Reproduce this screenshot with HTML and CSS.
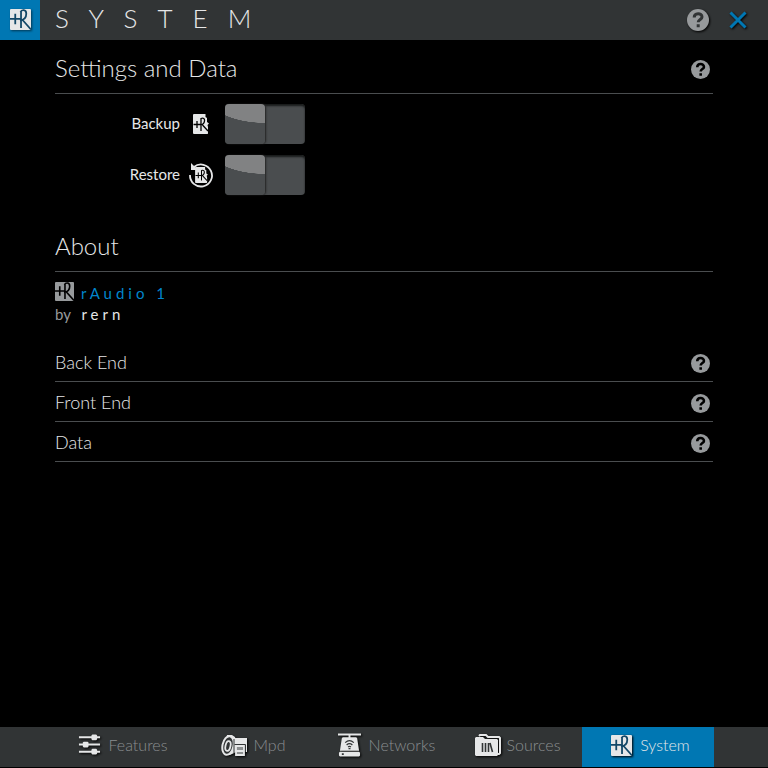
FILE: index.html
```html
<!DOCTYPE html>
<html lang="en">
<head>
<meta charset="utf-8">
<meta name="viewport" content="width=device-width, initial-scale=1">
<title>System</title>
<link rel="stylesheet" href="styles.css">
</head>
<body>
<svg class="sprite" aria-hidden="true">
  <symbol id="logo" viewBox="0 0 20 20">
    <rect width="20" height="20" rx="1" fill="currentColor"/>
    <path class="ink" d="M0 9.500H10M5 4.500V14.500M10.500 2.500V18M10 3C11 0.500 15.500 0 15.500 4.500C15.500 8.500 13 10.500 9.500 11M12 10.500L20 19.500"/>
  </symbol>
  <symbol id="help" viewBox="0 0 22 22">
    <circle cx="11" cy="11" r="11" fill="currentColor"/>
    <path class="ink help-ink" d="M7.200 8.500C7.200 3.500 15 3.500 15 8C15 10.500 11.200 10.500 11.200 13.300M11.200 15.300V18.200"/>
  </symbol>
  <symbol id="file" viewBox="0 0 16 20">
    <path fill="currentColor" d="M1 0H12.500V3L14 4V8L16 9.500L14.500 11L15 13V19.500L14.500 20H1Q0 20 0 19V1Q0 0 1 0Z"/>
    <path class="ink fine" d="M0.500 10.500H8M4 7V14M8 4V17M8 4.500C13 2.500 12.500 9.500 8 11M9.500 11L15 17"/>
  </symbol>
</svg>

<header class="topbar">
  <a class="brand" href="#" aria-label="Home"><svg class="icon-brand"><use href="#logo"/></svg></a>
  <h1 class="title">SYSTEM</h1>
  <button class="icon-button" aria-label="Help"><svg class="icon-help-large"><use href="#help"/></svg></button>
  <button class="icon-button close" aria-label="Close"><svg class="icon-close" viewBox="0 0 18 18"><path d="M1.500 1.500L16.500 16.500M16.500 1.500L1.500 16.500"/></svg></button>
</header>

<main class="content">
  <section class="settings">
    <div class="heading">
      <h2>Settings and Data</h2>
      <button class="icon-button small" aria-label="Help"><svg class="icon-help"><use href="#help"/></svg></button>
    </div>
    <div class="field">
      <label for="backup">Backup</label>
      <svg class="icon-file"><use href="#file"/></svg>
      <input class="switch" type="checkbox" id="backup">
    </div>
    <div class="field">
      <label for="restore">Restore</label>
      <svg class="icon-restore" viewBox="0 0 24 24">
        <path class="ring" d="M5 4A11 11 0 1 1 1 12"/>
        <path fill="currentColor" d="M2 0L3.500 1.500L8 6L7 7H2Z"/>
        <use href="#file" x="6" y="4" width="13" height="16"/>
      </svg>
      <input class="switch" type="checkbox" id="restore">
    </div>
  </section>

  <section class="about">
    <div class="heading"><h2>About</h2></div>
    <div class="credits">
      <p class="product"><svg class="icon-product"><use href="#logo"/></svg><a href="#">rAudio 1</a></p>
      <p class="author">by <a href="#">rern</a></p>
    </div>
  </section>

  <section class="subjects">
    <div class="heading sub"><h3>Back End</h3><button class="icon-button small" aria-label="Help"><svg class="icon-help"><use href="#help"/></svg></button></div>
    <div class="heading sub"><h3>Front End</h3><button class="icon-button small" aria-label="Help"><svg class="icon-help"><use href="#help"/></svg></button></div>
    <div class="heading sub"><h3>Data</h3><button class="icon-button small" aria-label="Help"><svg class="icon-help"><use href="#help"/></svg></button></div>
  </section>
</main>

<nav class="tabs">
  <a href="#"><svg class="icon-tab" viewBox="0 0 24 22"><path class="line" d="M1 3H23M1 10.500H23M1 18H23"/><path fill="currentColor" d="M15 0h4l1 1v4l-1 1h-4l-1-1V1zM6 7.500h4l1 1v4l-1 1H6l-1-1v-4zM15 15h4l1 1v4l-1 1h-4l-1-1v-4z"/></svg>Features</a>
  <a href="#"><svg class="icon-tab wide" viewBox="0 0 26 22">
    <path fill="currentColor" d="M6 1H11L14 3L15 6V18L9 21H4Z"/>
    <ellipse cx="7" cy="11.500" rx="5.500" ry="9.500" transform="rotate(12 7 11.500)" fill="#313435" stroke="currentColor" stroke-width="2"/>
    <ellipse cx="7" cy="12" rx="2.500" ry="5" transform="rotate(12 7 12)" fill="none" stroke="currentColor" stroke-width="1.800"/>
    <path fill="currentColor" d="M14 4H26V18H24V11H14Z"/>
    <path d="M15 12H23V21H15ZM15 17H23" fill="#8c8f90" stroke="currentColor" stroke-width="1.800"/>
    <path d="M13 5V19M13.500 10.500H24.500V18" fill="none" stroke="#313435"/>
  </svg>Mpd</a>
  <a href="#"><svg class="icon-tab tall" viewBox="0 0 24 24">
    <path fill="currentColor" d="M0 0H24V2H13V4H19L20 5L22 18H2L4 5L5 4H11V2H0ZM2 19H22L23 20V23L22 24H2L1 23V20Z"/>
    <path class="ink fine" d="M7.500 9.500Q12 5.500 16.500 9.500M9 12Q12 9.300 15 12M10.500 14Q12 12.800 13.500 14"/>
    <path fill="#313435" d="M4 20.500H6V22.500H4ZM11 15H13V16.500H11Z"/>
  </svg>Networks</a>
  <a href="#"><svg class="icon-tab folder" viewBox="0 0 26 22">
    <path d="M4 2L5 1H11L13 3H24L25 4V19L24 20H22" fill="none" stroke="currentColor" stroke-width="2"/>
    <path fill="currentColor" d="M0 4L1 3H8L10 5H22L23 6V21L22 22H1L0 21Z"/>
    <path class="books" d="M7.500 9V18M10.500 9V18M13.500 9V18M15 9L17.500 18"/>
  </svg>Sources</a>
  <a class="active" href="#" aria-current="page"><svg class="icon-brand"><use href="#logo"/></svg>System</a>
</nav>
</body>
</html>
```
FILE: styles.css
```css
:root {
  --blue: #0077b3;
  --link: #0086cc;
  --bar: #313435;
  --text: #e6e7e8;
  --gray: #979a9c;
  --line: #4a4d4f;
}

* { box-sizing: border-box; }

body {
  margin: 0;
  min-height: 100vh;
  display: flex;
  flex-direction: column;
  background: #000;
  color: var(--text);
  font: 300 16px/20px Lato, "Liberation Sans", sans-serif;
}

h1, h2, h3, p { margin: 0; font-weight: 300; }
a { color: inherit; text-decoration: none; }

.sprite { position: absolute; width: 0; height: 0; }
svg { display: block; flex: none; }
.ink { fill: none; stroke: var(--ink, #000); stroke-width: 1.7; }
.fine { stroke-width: 1.3; }
.help-ink { stroke-width: 3; }

.topbar {
  display: flex;
  align-items: center;
  height: 40px;
  padding-right: 10px;
  background: var(--bar);
}
.brand {
  --ink: #124767;
  display: grid;
  place-items: center;
  width: 40px;
  height: 40px;
  padding-bottom: 1px;
  background: var(--blue);
}
.icon-brand { width: 21px; height: 21px; filter: drop-shadow(1px 1px 1px #0008); }
.title {
  flex: 1;
  padding-left: 15px;
  font-size: 26px;
  line-height: 36px;
  letter-spacing: 20px;
  align-self: start;
}
.icon-button {
  --ink: var(--bar);
  display: grid;
  place-items: center;
  width: 40px;
  height: 40px;
  padding: 0 0 1px;
  border: 0;
  background: none;
  color: var(--gray);
}
.icon-button.small { --ink: #000; width: 26px; height: 26px; padding: 0; }
.icon-help-large { width: 22px; height: 22px; filter: drop-shadow(1px 1px 1px #000); }
.icon-help { width: 19px; height: 19px; }
.icon-close {
  width: 18px;
  height: 18px;
  fill: none;
  stroke: var(--blue);
  stroke-width: 3;
  filter: drop-shadow(1px 1px 1px #000);
}

.content { flex: 1; padding: 10px 55px 0; }
.heading {
  display: flex;
  align-items: center;
  justify-content: space-between;
  height: 44px;
  padding-bottom: 4px;
  border-bottom: 1px solid var(--line);
  margin-bottom: 10px;
}
.heading h2 { align-self: start; font-size: 24px; line-height: 36px; }

.field { display: flex; align-items: center; height: 40px; margin-bottom: 11px; }
.field label { width: 125px; padding-bottom: 2px; text-align: right; font-size: 15px; font-weight: 400; }
.icon-file { width: 16px; height: 20px; margin: 0 16px 0 13px; }
.icon-restore { width: 24px; height: 24px; margin: 0 12px 0 9px; overflow: visible; }
.ring { fill: none; stroke: currentColor; stroke-width: 1.8; }
.switch {
  appearance: none;
  display: block;
  width: 80px;
  height: 40px;
  margin: 0;
  border-radius: 4px;
  background: #4a4d4f;
  box-shadow: inset 0 2px 2px #181a1a;
}
.switch::before {
  content: "";
  display: block;
  width: 40px;
  height: 40px;
  border-radius: 4px;
  background: radial-gradient(ellipse 60px 30px at 40px -11px, #818283 99%, #4a4d4f 100%);
  box-shadow: 1px 0 2px #222;
}
.switch:checked { background: var(--blue); }
.switch:checked::before { margin-left: 40px; }

.about { margin-top: 33px; }
.credits { font-size: 15px; line-height: 21px; color: var(--gray); }
.credits p { font-weight: 400; }
.credits a { letter-spacing: 4px; }
.product { display: flex; align-items: center; height: 22px; color: var(--link); }
.icon-product { width: 19px; height: 19px; margin: 0 7px 3px 0; color: var(--gray); }
.author a { margin-left: 7px; color: var(--text); }

.subjects { margin-top: 17px; }
.heading.sub { height: 40px; padding-bottom: 0; margin: 0; }
.heading h3 { font-size: 18px; line-height: 24px; }
.sub .icon-button { margin-top: 4px; }

.tabs {
  display: grid;
  grid-template-columns: repeat(5, 1fr);
  height: 40px;
  margin-bottom: 1px;
  padding: 0 54px;
  background: var(--bar);
}
.tabs a {
  --ink: var(--bar);
  display: flex;
  align-items: center;
  justify-content: center;
  gap: 8px;
  padding: 0 0 4px 5px;
  color: #8a8e90;
}
.tabs svg { color: var(--text); filter: drop-shadow(1px 1px 1px #000); }
.tabs .active { --ink: #124767; background: var(--blue); color: var(--text); }
.icon-tab { width: 23px; height: 22px; }
.icon-tab.wide, .icon-tab.folder { width: 26px; margin-right: -2px; }
.icon-tab.wide { margin-left: -2px; }
.icon-tab.folder { margin-left: -2px; }
.icon-tab.tall { height: 24px; }
.line { fill: none; stroke: currentColor; stroke-width: 2; }
.books { fill: none; stroke: var(--bar); stroke-width: 1.6; }
```
